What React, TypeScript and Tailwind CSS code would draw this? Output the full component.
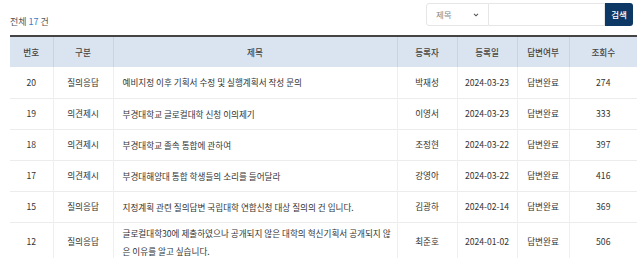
const rows = [
  { no: 20, type: '질의응답', title: '예비지정 이후 기획서 수정 및 실행계획서 작성 문의', name: '박재성', date: '2024-03-23', status: '답변완료', views: 274 },
  { no: 19, type: '의견제시', title: '부경대학교 글로컬대학 신청 이의제기', name: '이영서', date: '2024-03-23', status: '답변완료', views: 333 },
  { no: 18, type: '의견제시', title: '부경대학교 졸속 통합에 관하여', name: '조정현', date: '2024-03-22', status: '답변완료', views: 397 },
  { no: 17, type: '의견제시', title: '부경대해양대 통합 학생들의 소리를 들어달라', name: '강영아', date: '2024-03-22', status: '답변완료', views: 416 },
  { no: 15, type: '질의응답', title: '지정계획 관련 질의답변 국립대학 연합신청 대상 질의의 건 입니다.', name: '김광하', date: '2024-02-14', status: '답변완료', views: 369 },
  { no: 12, type: '질의응답', title: '글로컬대학30에 제출하였으나 공개되지 않은 대학의 혁신기획서 공개되지 않은 이유를 알고 싶습니다.', name: '최준호', date: '2024-01-02', status: '답변완료', views: 506 },
]

export default function App() {
  return (
    <div
      className="w-[640px] h-[258px] overflow-hidden bg-white pl-[10px] pt-[3px] text-[#333]"
      style={{ fontFamily: '"Noto Sans CJK KR", "Noto Sans", sans-serif' }}
    >
      {/* Top bar */}
      <div className="flex w-[627px] justify-between items-start h-[32px]">
        <p className="mt-[12px] text-[9px] leading-[14px] text-[#555]">
          전체 <span className="text-[#3a7bc8]">17</span> 건
        </p>
        <div className="flex h-[23px] mr-[4px]">
          <div className="flex w-[63px] items-center justify-between border border-[#e6e6e6] rounded-l-[3px] pl-[9px] pr-[9px]">
            <span className="text-[8.5px] text-[#888]">제목</span>
            <svg width="6" height="4" viewBox="0 0 7 5" className="text-[#555]">
              <path d="M1 1l2.5 2.5L6 1" fill="none" stroke="currentColor" strokeWidth="1.3" />
            </svg>
          </div>
          <div className="w-[116px] border-y border-r border-[#e6e6e6]" />
          <button className="w-[28px] bg-[#0d3764] rounded-r-[3px] text-[8.5px] font-medium text-white">
            검색
          </button>
        </div>
      </div>

      {/* Table */}
      <table className="table-fixed w-[627px] border-collapse border-t-2 border-[#444] text-[8.6px]">
        <colgroup>
          <col className="w-[43px]" />
          <col className="w-[60px]" />
          <col className="w-[284px]" />
          <col className="w-[60px]" />
          <col className="w-[60px]" />
          <col className="w-[52px]" />
          <col className="w-[68px]" />
        </colgroup>
        <thead>
          <tr className="h-[31px] bg-[#dae4f1] text-[#444]">
            {['번호', '구분', '제목', '등록자', '등록일', '답변여부', '조회수'].map((h, i) => (
              <th
                key={h}
                className={`font-medium ${i > 0 ? 'border-l border-[#c9d4e3]' : ''}`}
              >
                {h}
              </th>
            ))}
          </tr>
        </thead>
        <tbody>
          {rows.map((r) => (
            <tr key={r.no} className="border-b border-[#ececec] h-[31px]">
              <td className="text-center">{r.no}</td>
              <td className="text-center border-l border-[#efefef]">{r.type}</td>
              <td className="border-l border-[#efefef] pl-[9px] pr-[1px] py-[1px] leading-[18px] break-all">{r.title}</td>
              <td className="text-center border-l border-[#efefef]">{r.name}</td>
              <td className="text-center border-l border-[#efefef]">{r.date}</td>
              <td className="text-center border-l border-[#efefef]">{r.status}</td>
              <td className="text-center border-l border-[#efefef]">{r.views}</td>
            </tr>
          ))}
        </tbody>
      </table>
    </div>
  )
}
